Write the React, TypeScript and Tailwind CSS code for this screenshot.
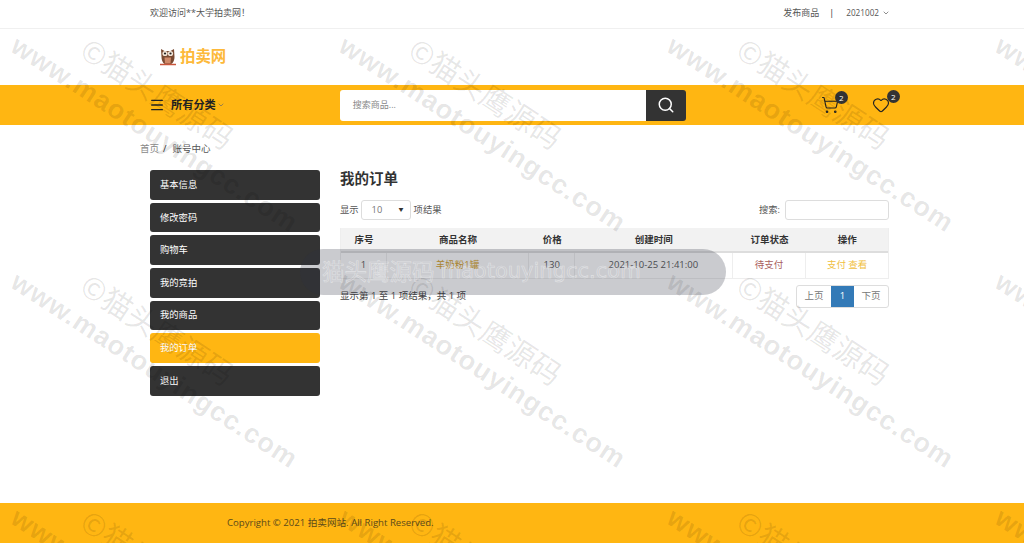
import React from 'react';
import { ChevronDown, Menu, Search, ShoppingCart, Heart } from 'lucide-react';

const sideItems = ['基本信息', '修改密码', '购物车', '我的竞拍', '我的商品', '我的订单', '退出'];

const columns = [
  { label: '序号', width: 'w-[46px]' },
  { label: '商品名称', width: 'w-[143px]' },
  { label: '价格', width: 'w-[46px]' },
  { label: '创建时间', width: 'w-[158px]' },
  { label: '订单状态', width: 'w-[74px]' },
  { label: '操作', width: 'w-[82px]' },
];

// watermark tile positions, the marks sit on a free canvas above the page
const markCols = [-307, 21, 349, 677, 1005];
const markRows = [-204, 32, 268, 504];

const Watermarks = () => (
  <div className="absolute inset-0 overflow-hidden pointer-events-none z-10">
    {markRows.map((top) =>
      markCols.map((left) => (
        <div key={`${top}-${left}`} className="absolute" style={{ top, left }}>
          <div className="absolute left-0 top-0 origin-top-left rotate-[33deg] whitespace-nowrap text-[27px] leading-none font-bold tracking-[1px] text-black/[0.1] font-['Liberation_Sans',sans-serif]">
            www.maotouyingcc.com
          </div>
          <div className="absolute left-[72px] top-[0px] origin-top-left rotate-[33deg] whitespace-nowrap text-[30px] leading-none text-black/[0.1] font-['Noto_Sans_CJK_SC',sans-serif]">
            ©猫头鹰源码
          </div>
        </div>
      ))
    )}
  </div>
);

export default function App() {
  return (
    <div className="relative w-[1024px] h-[543px] overflow-hidden bg-white text-[#333] font-['Open_Sans','Noto_Sans_CJK_SC',sans-serif]">
      <Watermarks />

      {/* Top bar */}
      <div className="h-[29px] border-b border-[#f0f0f0] pl-[150px] pr-[134px] pb-[3px] flex items-center justify-between text-[9px] text-[#555]">
        <span>欢迎访问**大学拍卖网！</span>
        <div className="flex items-center">
          <span>发布商品</span>
          <span className="ml-[10px] mr-[12px] text-[#333]">|</span>
          <span className="text-[8.2px] mt-[2px]">2021002</span>
          <ChevronDown size={8} className="ml-[3px] mt-[2px]" />
        </div>
      </div>

      {/* Logo */}
      <div className="h-[56px] pl-[160px] flex items-center">
        <svg width="16" height="19" viewBox="0 0 16 19" className="mr-[4px] mt-[-1px]">
          <path d="M1 2l3.5 2h6L14 2l.5 8c0 5-3 8-6.5 8s-6.5-3-6.5-8z" fill="#7a4a32" />
          <circle cx="5" cy="6.5" r="2.6" fill="#f3e6d8" />
          <circle cx="10.5" cy="6.5" r="2.6" fill="#f3e6d8" />
          <circle cx="5" cy="6.5" r="1.1" fill="#222" />
          <circle cx="10.5" cy="6.5" r="1.1" fill="#222" />
          <path d="M4.5 10.5h6.5l-.5 6h-5.5z" fill="#d08a6a" />
          <path d="M0 17.5h16" stroke="#c9553b" strokeWidth="1.5" />
        </svg>
        <span className="text-[15.4px] font-bold text-[#fdb93a]">拍卖网</span>
      </div>

      {/* Yellow nav */}
      <div className="h-[40px] bg-[#ffb612] pl-[149px] flex items-center">
        <Menu size={16} strokeWidth={2} className="text-[#222]" />
        <span className="ml-[6px] text-[11.2px] font-bold text-[#222]">所有分类</span>
        <ChevronDown size={8} className="ml-[1px] text-[#666]" />
        <div className="ml-[115px] w-[346px] h-[31px] flex">
          <div className="flex-1 bg-white rounded-l-[3px] pl-[13px] flex items-center text-[9px] text-[#888]">搜索商品...</div>
          <button className="w-[40px] bg-[#333] rounded-r-[3px] flex items-center justify-center">
            <Search size={18} strokeWidth={2} className="text-white" />
          </button>
        </div>
        <div className="relative ml-[135px]">
          <ShoppingCart size={18} strokeWidth={1.5} className="text-[#222]" />
          <span className="absolute -top-[5px] left-[14px] w-[13px] h-[13px] rounded-full bg-[#333] text-white text-[8px] flex items-center justify-center">2</span>
        </div>
        <div className="relative ml-[33px]">
          <Heart size={18} strokeWidth={1.5} className="text-[#222]" />
          <span className="absolute -top-[6px] left-[15px] w-[13px] h-[13px] rounded-full bg-[#333] text-white text-[8px] flex items-center justify-center">2</span>
        </div>
      </div>

      {/* Breadcrumb */}
      <div className="pl-[140px] pt-[3px] h-[45px] flex items-center text-[9.5px] text-[#888]">
        <span>首页</span>
        <span className="ml-[4px] mr-[6px] text-[#333]">/</span>
        <span className="text-[#555]">账号中心</span>
      </div>

      <div className="pl-[150px] flex">
        {/* Sidebar */}
        <div className="w-[170px] flex flex-col gap-[3px]">
          {sideItems.map((item) => (
            <div
              key={item}
              className={`h-[29.67px] rounded-[3px] pl-[10px] flex items-center text-[9.3px] text-white ${item === '我的订单' ? 'bg-[#ffb612]' : 'bg-[#333]'}`}
            >
              {item}
            </div>
          ))}
        </div>

        {/* Orders */}
        <div className="ml-[20px] w-[549px]">
          <h2 className="h-[18px] flex items-center text-[14.5px] font-bold text-[#333]">我的订单</h2>
          <div className="mt-[12px] h-[20px] flex items-center justify-between text-[9.3px] text-[#555]">
            <div className="flex items-center">
              <span>显示</span>
              <div className="ml-[2px] mr-[3px] w-[50px] h-[20px] border border-[#ddd] rounded-[3px] pl-[10px] pr-[6px] flex items-center justify-between text-[#777]">
                <span>10</span>
                <span className="text-[5px] text-[#333]">▼</span>
              </div>
              <span>项结果</span>
            </div>
            <div className="flex items-center">
              <span className="mr-[5px]">搜索:</span>
              <div className="w-[104px] h-[20px] border border-[#ddd] rounded-[3px]" />
            </div>
          </div>

          <div className="mt-[8px] border-x border-b border-[#eee]">
            <div className="flex h-[25px] pt-[1px] bg-[#f2f2f2] border-b-2 border-[#ddd] text-[9.5px] font-bold text-[#333]">
              {columns.map((col) => (
                <div key={col.label} className={`${col.width} grow flex items-center justify-center`}>{col.label}</div>
              ))}
            </div>
            <div className="flex h-[25px] text-[9.5px] text-[#555]">
              <div className="w-[46px] grow flex items-center justify-center border-r border-[#eee]">1</div>
              <div className="w-[143px] grow flex items-center justify-center border-r border-[#eee] text-[#d4a12a]">羊奶粉1罐</div>
              <div className="w-[46px] grow flex items-center justify-center border-r border-[#eee]">130</div>
              <div className="w-[158px] grow flex items-center justify-center border-r border-[#eee]">2021-10-25 21:41:00</div>
              <div className="w-[74px] grow flex items-center justify-center border-r border-[#eee] text-[#a9605e]">待支付</div>
              <div className="w-[82px] grow flex items-center justify-center text-[#f0c040]">支付 查看</div>
            </div>
          </div>

          <div className="mt-[6px] flex items-center justify-between text-[9.5px] text-[#444]">
            <span>显示第 1 至 1 项结果，共 1 项</span>
            <div className="flex h-[23px] border border-[#ddd] rounded-[3px] text-[#777] overflow-hidden">
              <span className="w-[34px] flex items-center justify-center">上页</span>
              <span className="w-[23px] bg-[#337ab7] text-white flex items-center justify-center">1</span>
              <span className="w-[34px] flex items-center justify-center">下页</span>
            </div>
          </div>
        </div>
      </div>

      {/* Footer */}
      <div className="absolute left-0 right-0 bottom-0 h-[40px] bg-[#ffb612] pl-[227px] pt-[13px] text-[9.6px] text-[#5b4a1a]">
        Copyright © 2021 拍卖网站. All Right Reserved.
      </div>

      {/* Translucent site pill */}
      <div className="absolute left-[300px] top-[249px] w-[426px] h-[46px] rounded-full bg-[#2b3040]/25 z-20 flex items-center pl-[22px] whitespace-nowrap text-transparent [-webkit-text-stroke:0.6px_rgba(255,255,255,0.45)]">
        <span className="text-[22.5px]">猫头鹰源码</span>
        <span className="ml-[6px] text-[21px] font-['DejaVu_Sans',sans-serif]">maotouyingcc.com</span>
      </div>
    </div>
  );
}
